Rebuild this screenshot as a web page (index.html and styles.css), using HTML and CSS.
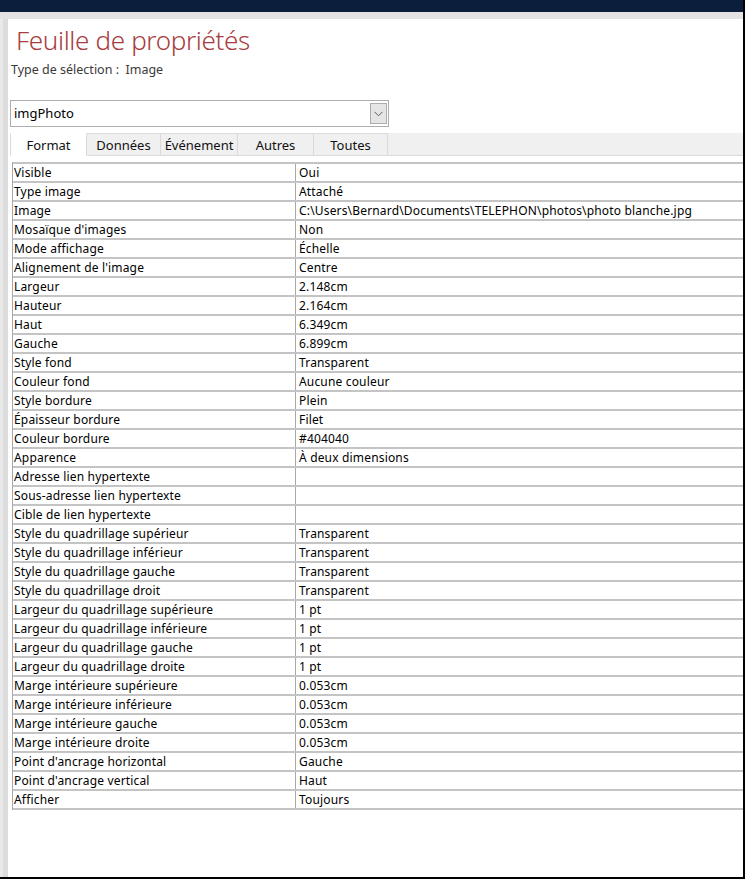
FILE: index.html
```html
<!DOCTYPE html>
<html lang="fr">
<head>
<meta charset="utf-8">
<title>Feuille de propriétés</title>
<link rel="stylesheet" href="styles.css">
</head>
<body>
<div class="window">
  <div class="titlebar"></div>
  <div class="topband"></div>
  <div class="frame">
    <div class="leftstrip"></div>
    <div class="sheet">
      <h1 class="title">Feuille de propriétés</h1>
      <div class="seltype">Type de sélection :&nbsp; Image</div>
      <div class="combo">
        <span class="combo-text">imgPhoto</span>
        <span class="combo-btn"><svg width="9" height="6" viewBox="0 0 9 6"><path d="M0.5 0.8 L4.5 4.8 L8.5 0.8" fill="none" stroke="#606060" stroke-width="1"/></svg></span>
      </div>
      <div class="tabs">
        <div class="tab active">Format</div>
        <div class="tab">Données</div>
        <div class="tab">Événement</div>
        <div class="tab">Autres</div>
        <div class="tab">Toutes</div>
        <div class="tab-fill"></div>
      </div>
      <div class="grid">
        <div class="row"><div class="lbl">Visible</div><div class="val">Oui</div></div>
        <div class="row"><div class="lbl">Type image</div><div class="val">Attaché</div></div>
        <div class="row"><div class="lbl">Image</div><div class="val">C:\Users\Bernard\Documents\TELEPHON\photos\photo blanche.jpg</div></div>
        <div class="row"><div class="lbl">Mosaïque d'images</div><div class="val">Non</div></div>
        <div class="row"><div class="lbl">Mode affichage</div><div class="val">Échelle</div></div>
        <div class="row"><div class="lbl">Alignement de l'image</div><div class="val">Centre</div></div>
        <div class="row"><div class="lbl">Largeur</div><div class="val">2.148cm</div></div>
        <div class="row"><div class="lbl">Hauteur</div><div class="val">2.164cm</div></div>
        <div class="row"><div class="lbl">Haut</div><div class="val">6.349cm</div></div>
        <div class="row"><div class="lbl">Gauche</div><div class="val">6.899cm</div></div>
        <div class="row"><div class="lbl">Style fond</div><div class="val">Transparent</div></div>
        <div class="row"><div class="lbl">Couleur fond</div><div class="val">Aucune couleur</div></div>
        <div class="row"><div class="lbl">Style bordure</div><div class="val">Plein</div></div>
        <div class="row"><div class="lbl">Épaisseur bordure</div><div class="val">Filet</div></div>
        <div class="row"><div class="lbl">Couleur bordure</div><div class="val">#404040</div></div>
        <div class="row"><div class="lbl">Apparence</div><div class="val">À deux dimensions</div></div>
        <div class="row"><div class="lbl">Adresse lien hypertexte</div><div class="val"></div></div>
        <div class="row"><div class="lbl">Sous-adresse lien hypertexte</div><div class="val"></div></div>
        <div class="row"><div class="lbl">Cible de lien hypertexte</div><div class="val"></div></div>
        <div class="row"><div class="lbl">Style du quadrillage supérieur</div><div class="val">Transparent</div></div>
        <div class="row"><div class="lbl">Style du quadrillage inférieur</div><div class="val">Transparent</div></div>
        <div class="row"><div class="lbl">Style du quadrillage gauche</div><div class="val">Transparent</div></div>
        <div class="row"><div class="lbl">Style du quadrillage droit</div><div class="val">Transparent</div></div>
        <div class="row"><div class="lbl">Largeur du quadrillage supérieure</div><div class="val">1 pt</div></div>
        <div class="row"><div class="lbl">Largeur du quadrillage inférieure</div><div class="val">1 pt</div></div>
        <div class="row"><div class="lbl">Largeur du quadrillage gauche</div><div class="val">1 pt</div></div>
        <div class="row"><div class="lbl">Largeur du quadrillage droite</div><div class="val">1 pt</div></div>
        <div class="row"><div class="lbl">Marge intérieure supérieure</div><div class="val">0.053cm</div></div>
        <div class="row"><div class="lbl">Marge intérieure inférieure</div><div class="val">0.053cm</div></div>
        <div class="row"><div class="lbl">Marge intérieure gauche</div><div class="val">0.053cm</div></div>
        <div class="row"><div class="lbl">Marge intérieure droite</div><div class="val">0.053cm</div></div>
        <div class="row"><div class="lbl">Point d'ancrage horizontal</div><div class="val">Gauche</div></div>
        <div class="row"><div class="lbl">Point d'ancrage vertical</div><div class="val">Haut</div></div>
        <div class="row last"><div class="lbl">Afficher</div><div class="val">Toujours</div></div>
      </div>
    </div>
  </div>
</div>
</body>
</html>
```
FILE: styles.css
```css
html, body {
  margin: 0;
  padding: 0;
  background: #ffffff;
}
body {
  font-family: "Noto Sans", "Open Sans", sans-serif;
  color: #000;
  overflow: hidden;
}
.window {
  width: 745px;
  height: 879px;
  box-sizing: border-box;
  border-right: 2px solid #000;
  border-bottom: 2px solid #000;
  display: flex;
  flex-direction: column;
  overflow: hidden;
}
.titlebar {
  height: 12px;
  background: #0b1e3b;
  flex: none;
}
.topband {
  height: 7px;
  background: #e3e3e3;
  flex: none;
}
.frame {
  flex: 1;
  display: flex;
  min-height: 0;
}
.leftstrip {
  width: 8px;
  flex: none;
  background: linear-gradient(to right, #e9e9e9 0 3px, #dcdcdc 3px 8px);
}
.sheet {
  flex: 1;
  background: #fff;
  overflow: hidden;
  min-width: 0;
}
.title {
  margin: 5px 0 0 8px;
  font-size: 26px;
  line-height: 32px;
  font-weight: 300;
  color: #a83c40;
  letter-spacing: -0.35px;
}
.seltype {
  margin: 6px 0 0 3px;
  font-size: 12.5px;
  line-height: 16px;
  color: #3a3a3a;
}
.combo {
  margin: 22px 0 0 2px;
  width: 379px;
  height: 27px;
  box-sizing: border-box;
  border: 1px solid #adadad;
  display: flex;
  align-items: center;
  justify-content: space-between;
  padding: 0 1px 0 3px;
}
.combo-text {
  font-size: 13px;
  line-height: 17px;
}
.combo-btn {
  width: 17px;
  height: 21px;
  box-sizing: border-box;
  border: 1px solid #acacac;
  background: #e5e5e5;
  display: flex;
  align-items: center;
  justify-content: center;
}
.tabs {
  margin: 6px 0 0 2px;
  display: flex;
  height: 23px;
}
.tab {
  box-sizing: border-box;
  height: 23px;
  background: #f0f0f0;
  border: 1px solid #dadada;
  border-left: none;
  font-size: 13px;
  line-height: 21px;
  padding-top: 1px;
  text-align: center;
  color: #111;
}
.tab:nth-child(1) { width: 77px; }
.tab:nth-child(2) { width: 74px; }
.tab:nth-child(3) { width: 77px; }
.tab:nth-child(4) { width: 76px; }
.tab:nth-child(5) { width: 74px; }
.tab.active {
  background: #fff;
  border-left: 1px solid #dadada;
  border-bottom-color: #fff;
  border-top-color: #fff;
}
.tab-fill {
  flex: 1;
  background: #f0f0f0;
  border-bottom: 1px solid #dadada;
}
.grid {
  margin: 6px 0 0 4px;
  width: 900px;
  border-left: 1px solid #a8a8a8;
}
.row {
  display: grid;
  grid-template-columns: 283px 1fr;
  height: 19px;
  box-sizing: border-box;
  border-top: 2px solid #c4c4c4;
  font-size: 12px;
  line-height: 17px;
  letter-spacing: 0.17px;
}
.row.last {
  height: 21px;
  border-bottom: 2px solid #c4c4c4;
}
.lbl {
  padding-left: 1px;
  white-space: nowrap;
  border-right: 1px solid #a8a8a8;
}
.val {
  padding-left: 3px;
  white-space: nowrap;
}
```
